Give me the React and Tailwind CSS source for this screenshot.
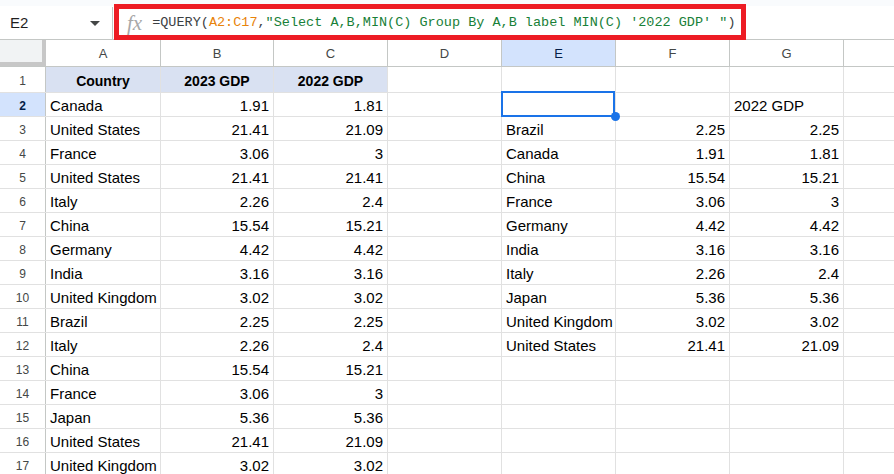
import React from 'react';

const COLS = [
    { key: 'A', w: 'w-[115px]' },
    { key: 'B', w: 'w-[113px]' },
    { key: 'C', w: 'w-[114px]' },
    { key: 'D', w: 'w-[114px]' },
    { key: 'E', w: 'w-[114px]' },
    { key: 'F', w: 'w-[114px]' },
    { key: 'G', w: 'w-[114px]' },
];

const source = [
    ['Canada', '1.91', '1.81'],
    ['United States', '21.41', '21.09'],
    ['France', '3.06', '3'],
    ['United States', '21.41', '21.41'],
    ['Italy', '2.26', '2.4'],
    ['China', '15.54', '15.21'],
    ['Germany', '4.42', '4.42'],
    ['India', '3.16', '3.16'],
    ['United Kingdom', '3.02', '3.02'],
    ['Brazil', '2.25', '2.25'],
    ['Italy', '2.26', '2.4'],
    ['China', '15.54', '15.21'],
    ['France', '3.06', '3'],
    ['Japan', '5.36', '5.36'],
    ['United States', '21.41', '21.09'],
    ['United Kingdom', '3.02', '3.02'],
];

const result = [
    ['Brazil', '2.25', '2.25'],
    ['Canada', '1.91', '1.81'],
    ['China', '15.54', '15.21'],
    ['France', '3.06', '3'],
    ['Germany', '4.42', '4.42'],
    ['India', '3.16', '3.16'],
    ['Italy', '2.26', '2.4'],
    ['Japan', '5.36', '5.36'],
    ['United Kingdom', '3.02', '3.02'],
    ['United States', '21.41', '21.09'],
];

const Cell = ({ w, children, num, className = '' }) => (
    <div className={`${w} shrink-0 h-full border-r border-[#e1e1e1] flex items-center pt-[3px] overflow-hidden whitespace-nowrap ${num ? 'justify-end pr-[4px]' : 'pl-[4px]'} ${className}`}>
        {children}
    </div>
);

const FormulaBar = () => (
    <div className="relative">
        <div className="h-[6px] bg-[#f9fbfd]" />
        <div className="h-[34px] bg-white border-b border-[#c4c7c5] flex items-center pt-[1px]">
            <div className="w-[113px] h-full flex items-center pl-[10px] pr-[12px] border-r border-[#c4c7c5]">
                <span className="text-[15px] text-[#1f1f1f]">E2</span>
                <span className="ml-auto w-0 h-0 border-l-[5px] border-r-[5px] border-t-[5px] border-l-transparent border-r-transparent border-t-[#444746]" />
            </div>
            <span className="ml-[14px] text-[21px] italic text-[#a8a8a8] font-['Liberation_Serif',serif] leading-none">fx</span>
            <div className="ml-[10px] text-[13.5px] font-['Liberation_Mono',monospace] whitespace-pre text-[#3c4043]">
                =QUERY(<span className="text-[#e8830a]">A2:C17</span>,<span className="text-[#188038]">"Select A,B,MIN(C) Group By A,B label MIN(C) '2022 GDP' "</span>)
            </div>
        </div>
        <div className="absolute left-[114px] top-[4px] w-[632px] h-[36px] border-[5px] border-[#ed1c24] pointer-events-none" />
    </div>
);

const HeaderRow = () => (
    <div className="flex h-[27px] border-b border-[#c4c7c5] bg-white">
        <div className="w-[46px] shrink-0 h-full bg-[#f1f3f4] border-r-4 border-b-4 border-[#c7c7c7] -mb-px" />
        {COLS.map((c) => (
            <div key={c.key} className={`${c.w} shrink-0 h-full border-r border-[#c4c7c5] flex items-center justify-center pt-[1px] text-[13px] ${c.key === 'E' ? 'bg-[#d3e3fd] text-[#041e49]' : 'text-[#444746]'}`}>
                {c.key}
            </div>
        ))}
        <div className="flex-1" />
    </div>
);

const RowHead = ({ n, active }) => (
    <div className={`w-[46px] shrink-0 h-full border-r border-[#c4c7c5] flex items-center justify-center pt-[2px] text-[12px] ${active ? 'bg-[#d3e3fd] text-[#041e49] font-bold' : 'text-[#444746]'}`}>
        {n}
    </div>
);

export default function App() {
    const rows = [];
    for (let i = 2; i <= 17; i++) {
        const s = source[i - 2];
        const r = result[i - 3];
        rows.push(
            <div key={i} className="flex h-[24px] border-b border-[#e1e1e1]">
                <RowHead n={i} active={i === 2} />
                <Cell w={COLS[0].w}>{s[0]}</Cell>
                <Cell w={COLS[1].w} num>{s[1]}</Cell>
                <Cell w={COLS[2].w} num>{s[2]}</Cell>
                <Cell w={COLS[3].w} />
                {i === 2 ? (
                    <div className="w-[114px] shrink-0 h-full border-r border-[#e1e1e1] relative z-10">
                        <div className="absolute -left-px -top-[2px] right-0 -bottom-px border-2 border-[#1a73e8]" />
                        <div className="absolute -right-[5px] -bottom-[5px] w-[9px] h-[9px] rounded-full bg-[#1a73e8]" />
                    </div>
                ) : (
                    <Cell w={COLS[4].w}>{r ? r[0] : ''}</Cell>
                )}
                <Cell w={COLS[5].w} num>{r ? r[1] : ''}</Cell>
                <Cell w={COLS[6].w} num={i !== 2}>{i === 2 ? '2022 GDP' : r ? r[2] : ''}</Cell>
                <div className="flex-1" />
            </div>
        );
    }

    return (
        <div className="w-[894px] h-[474px] overflow-hidden bg-white font-['Liberation_Sans',Arial,sans-serif] text-[15px] text-black">
            <FormulaBar />
            <HeaderRow />
            <div className="flex h-[26px] border-b border-[#e1e1e1]">
                <RowHead n={1} />
                <Cell w={COLS[0].w} className="justify-center !pl-0 bg-[#d9e1f2] font-bold text-[14px]">Country</Cell>
                <Cell w={COLS[1].w} className="justify-center !pl-0 bg-[#d9e1f2] font-bold text-[14px]">2023 GDP</Cell>
                <Cell w={COLS[2].w} className="justify-center !pl-0 bg-[#d9e1f2] font-bold text-[14px]">2022 GDP</Cell>
                <Cell w={COLS[3].w} />
                <Cell w={COLS[4].w} />
                <Cell w={COLS[5].w} />
                <Cell w={COLS[6].w} />
                <div className="flex-1" />
            </div>
            {rows}
        </div>
    );
}
